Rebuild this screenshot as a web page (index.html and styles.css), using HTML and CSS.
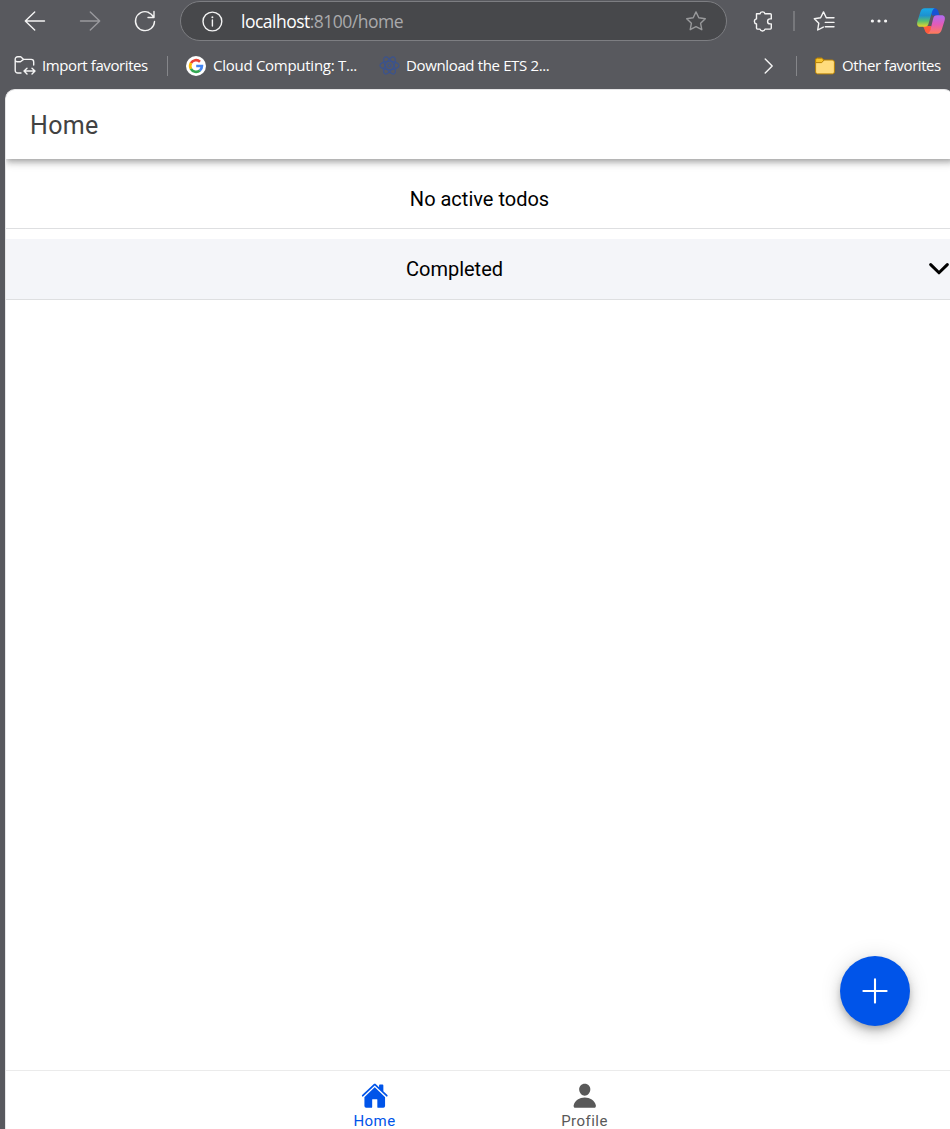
FILE: index.html
```html
<!DOCTYPE html>
<html lang="en">
<head>
<meta charset="utf-8">
<title>Home</title>
<link rel="stylesheet" href="styles.css">
</head>
<body>
<header class="toolbar">
  <svg class="icon" viewBox="0 0 24 24"><path d="M21.5 12H2.3M11.7 3l-9.4 9 9.4 9"/></svg>
  <svg class="icon dim" viewBox="0 0 24 24"><path d="M2.5 12h19.2M12.3 3l9.4 9-9.4 9"/></svg>
  <svg class="icon" viewBox="0 0 24 24"><path d="M15.5 3.3A9.5 9.5 0 1 0 21.5 12.5M21 2.5v6h-6M15.2 3.3Q18.5 4.7 20.8 8.3"/></svg>
  <div class="address">
    <svg class="info" viewBox="0 0 24 24"><circle cx="12.4" cy="12.5" r="9.4"/><path d="M12.4 11v6"/><circle class="solid" cx="12.4" cy="8.2" r="1"/></svg>
    <span class="url"><b>localhost</b>:8100/home</span>
    <svg class="star" viewBox="0 0 24 24"><path d="M12 2.9l2.8 5.9 6.5.9-4.7 4.6 1.2 6.4-5.8-3-5.8 3 1.2-6.4-4.7-4.6 6.5-.9z"/></svg>
  </div>
  <svg class="icon puzzle" viewBox="0 0 24 24"><path d="M5.5 4.8H9a2.6 2.6 0 0 1 5 0h5.3a1 1 0 0 1 1 1v4.1h-1.2a2.5 2.5 0 0 0 0 5h1.2v4.2a1 1 0 0 1-1 1H14a2.6 2.6 0 0 1-5 0H6.5a1 1 0 0 1-1-1V15a2.6 2.6 0 0 1 0-5.1z"/></svg>
  <i class="rule"></i>
  <svg class="icon favs" viewBox="0 0 24 24"><path d="M14.3 8.8L11.5 2.9 8.6 8.8l-6.3.9 4.5 4.5L5.7 21l5.6-2.9M14.3 8.8H22M13.3 13.4H22M13.3 17.8H22"/></svg>
  <svg class="icon more" viewBox="0 0 24 24"><circle class="solid" cx="5.4" cy="12" r="1.6"/><circle class="solid" cx="12" cy="12" r="1.6"/><circle class="solid" cx="18.6" cy="12" r="1.6"/></svg>
  <svg class="copilot" viewBox="0 0 30 30">
    <defs>
      <linearGradient id="cool" x1="0" y1="0" x2="0" y2="1"><stop offset="0" stop-color="#19a9e8"/><stop offset=".4" stop-color="#1d91cf"/><stop offset=".7" stop-color="#58bd70"/><stop offset="1" stop-color="#e8d62a"/></linearGradient>
      <linearGradient id="warm" x1="0" y1="0" x2="0" y2="1"><stop offset="0" stop-color="#ae6cf2"/><stop offset=".5" stop-color="#e35bb8"/><stop offset="1" stop-color="#ff7c58"/></linearGradient>
    </defs>
    <path fill="#1753d5" d="M14 2.2h4.6c2.3 0 3.2 1.3 3.8 3.4l1.1 4H16z"/>
    <path fill="#ff5a3c" d="M7 20h8.5l-1.5 7.7h-1.4c-2.1 0-3.2-1.4-3.8-3.4z"/>
    <path fill="url(#cool)" d="M8.8 2.2h10.7c-2.1 0-3 2-3.6 4.1l-3.3 11.2c-.6 2.2-1.6 3.2-4 3.2H4.4c-3.1 0-3.8-2.4-3-5.3l2.8-9c.8-2.6 2-4.2 4.6-4.2z"/>
    <path fill="url(#warm)" d="M21.2 9.2h4.4c3.1 0 3.8 2.4 3 5.3l-2.8 9c-.8 2.6-2 4.2-4.6 4.2H10.9c2.1 0 3-2 3.6-4.1l2.7-11.2c.6-2.2 1.6-3.2 4-3.2z"/>
  </svg>
</header>

<nav class="bookmarks">
  <svg class="import" viewBox="0 0 22 22"><path d="M7 18H3.8a2.6 2.6 0 0 1-2.6-2.6V4.2a2.5 2.5 0 0 1 2.5-2.5h3l3 2.7h7.5a2.5 2.5 0 0 1 2.5 2.5V10M1.2 5.5q.3 1.2 2 1.2h3.2L9.6 4.4M10.5 16h10M13 13.2L10 16l3 2.9M18 13.2l3 2.8-3 2.9"/></svg>
  <span class="b-import">Import favorites</span>
  <i class="rule thin"></i>
  <svg class="google" viewBox="0 0 20 20"><circle cx="10" cy="10" r="10" fill="#fff"/><g fill="none" stroke-width="2.7"><path stroke="#ea4335" d="M4.9 7.1A5.9 5.9 0 0 1 14 5.7"/><path stroke="#fbbc05" d="M5 13A5.9 5.9 0 0 1 5 7"/><path stroke="#34a853" d="M13.9 14.4A5.9 5.9 0 0 1 4.9 12.9"/><path stroke="#4285f4" d="M10.2 10h5.7a5.9 5.9 0 0 1-2.1 4.5"/></g></svg>
  <span class="b-cloud">Cloud Computing: T...</span>
  <svg class="atom" viewBox="0 0 22 22"><ellipse cx="11" cy="11" rx="10" ry="4.2"/><ellipse cx="11" cy="11" rx="10" ry="4.2" transform="rotate(60 11 11)"/><ellipse cx="11" cy="11" rx="10" ry="4.2" transform="rotate(120 11 11)"/><circle cx="11" cy="11" r="1.7"/></svg>
  <span class="b-ets">Download the ETS 2...</span>
  <svg class="overflow" viewBox="0 0 10 16"><path d="M1.2 1l7 7-7 7"/></svg>
  <i class="rule thin"></i>
  <svg class="folder" viewBox="0 0 20 18"><path fill="#ffdc7d" stroke="#b78105" d="M.6 3A1.8 1.8 0 0 1 2.4 1.2h4.2L9 3h8.2a2.2 2.2 0 0 1 2.2 2.2v9.7a2 2 0 0 1-2 2H2.6a2 2 0 0 1-2-2z"/><path fill="#f8c52e" stroke="#b78105" d="M.6 5.6V3A1.8 1.8 0 0 1 2.4 1.2h4.2L9 3 6.8 5.6z"/></svg>
  <span class="b-other">Other favorites</span>
</nav>

<main class="app">
  <div class="app-header"><h1>Home</h1></div>
  <section class="content">
    <div class="item">No active todos</div>
    <div class="item completed">
      <span>Completed</span>
      <svg class="chevron" viewBox="0 0 20 12"><path d="M1.7 1.6L10 9.8l8.3-8.2"/></svg>
    </div>
    <button class="fab" aria-label="Add"><svg viewBox="0 0 30 30"><path d="M15 3.4v23.2M3.4 15h23.2"/></svg></button>
  </section>
  <footer class="tabs">
    <a class="tab selected">
      <svg viewBox="0 0 512 512"><path d="M261.56 101.28a8 8 0 00-11.06 0L66.4 277.15a8 8 0 00-2.47 5.79L63.9 448a32 32 0 0032 32H192a16 16 0 0016-16V328a8 8 0 018-8h80a8 8 0 018 8v136a16 16 0 0016 16h96.06a32 32 0 0032-32V282.94a8 8 0 00-2.47-5.79z"/><path d="M490.91 244.15l-74.8-71.56V64a16 16 0 00-16-16h-48a16 16 0 00-16 16v32l-57.92-55.38C272.77 35.14 264.71 32 256 32c-8.68 0-16.72 3.14-22.14 8.63L21.16 244.13c-6.22 6-7 15.87-1.34 22.37A16 16 0 0043 267.56L250.5 69.28a8 8 0 0111.06 0l207.52 198.28a16 16 0 0022.59-.44c6.14-6.36 5.63-16.86-.76-22.97z"/></svg>
      <span>Home</span>
    </a>
    <a class="tab">
      <svg viewBox="0 0 512 512"><path d="M332.64 64.58C313.18 43.57 286 32 256 32c-30.16 0-57.43 11.5-76.8 32.38-19.58 21.11-29.12 49.8-26.88 80.78C156.76 206.28 203.27 256 256 256s99.16-49.71 103.67-110.82c2.27-30.7-7.33-59.33-27.03-80.6zM432 480H80a31 31 0 01-24.2-11.13c-6.5-7.77-9.12-18.38-7.18-29.11C57.06 392.94 83.4 353.61 124.8 326c36.78-24.51 83.37-38 131.2-38s94.42 13.5 131.2 38c41.4 27.6 67.74 66.93 76.18 113.75 1.94 10.73-.68 21.34-7.18 29.11A31 31 0 01432 480z"/></svg>
      <span>Profile</span>
    </a>
  </footer>
</main>
</body>
</html>
```

FILE: styles.css
```css
* { box-sizing: border-box; }

body {
  margin: 0;
  height: 1129px;
  display: flex;
  flex-direction: column;
  overflow: hidden;
  background: #58595e;
  color: #fff;
  font-family: "Open Sans", "Noto Sans", sans-serif;
}

svg { display: block; flex: none; }

/* Browser toolbar */
.toolbar {
  height: 42px;
  padding-left: 23px;
  display: flex;
  align-items: center;
  flex: none;
}

.toolbar svg, .import, .overflow {
  fill: none;
  stroke: #f4f4f4;
  stroke-width: 1.4;
  stroke-linecap: round;
  stroke-linejoin: round;
}

.toolbar .solid { fill: #f4f4f4; stroke: none; }
.icon { width: 24px; height: 24px; margin-right: 31px; }
.toolbar .dim { stroke: #99999d; }
.icon:nth-child(3) { margin-right: 23px; }

.address {
  width: 547px;
  height: 40px;
  margin-right: 24px;
  padding: 0 18px 0 19px;
  display: flex;
  align-items: center;
  flex: none;
  border: 1px solid #7d7e82;
  border-radius: 20px;
  background: #47484b;
}

.info { width: 24px; height: 24px; }
.toolbar .star { width: 24px; height: 24px; margin-left: auto; stroke: #98999b; }

.url {
  margin-left: 17px;
  font-size: 17.5px;
  letter-spacing: -0.51px;
  line-height: 24px;
  padding-bottom: 1px;
  color: #aaaaac;
  white-space: nowrap;
}

.url b { font-weight: 400; color: #fff; }

.rule { width: 1px; height: 20px; flex: none; background: #85868a; }
.puzzle { margin-right: 18px; }
.toolbar .rule { width: 2px; background: #77787c; }
.favs { margin: 0 31px 0 17px; }
.more { margin-right: 25px; }
.toolbar .copilot { width: 30px; height: 30px; stroke: none; }

/* Favorites bar */
.bookmarks {
  height: 47px;
  padding-left: 14px;
  display: flex;
  align-items: center;
  flex: none;
  font-size: 15px;
  line-height: 20px;
  white-space: nowrap;
}

.bookmarks span { flex: none; padding-bottom: 2px; }
.import { width: 22px; height: 22px; }
.b-import { width: 125px; margin-left: 6px; letter-spacing: -0.41px; }
.google { width: 20px; height: 20px; margin-left: 18px; }
.b-cloud { width: 166px; margin-left: 7px; letter-spacing: -0.27px; }
.atom { width: 21px; height: 21px; fill: none; stroke: #3b538e; stroke-width: 1.3; }
.b-ets { width: 358px; margin-left: 6px; letter-spacing: -0.36px; }
.overflow { width: 10px; height: 16px; margin-right: 22px; }
.folder { width: 20px; height: 18px; margin-left: 18px; }
.b-other { margin-left: 7px; letter-spacing: -0.44px; }

/* Application */
.app {
  position: relative;
  width: 949px;
  height: 1040px;
  margin-left: 5px;
  display: flex;
  flex-direction: column;
  flex: none;
  overflow: hidden;
  border-left: 1px solid #e6e6e7;
  border-top: 1px solid #e6e6e7;
  border-radius: 10px 10px 0 0;
  background: #fff;
  color: #000;
  font-family: Roboto, sans-serif;
}

.app-header {
  height: 69px;
  padding: 1px 24px 0;
  display: flex;
  align-items: center;
  flex: none;
  z-index: 1;
  box-shadow: 0 2.5px 5px -1px rgba(0, 0, 0, .2), 0 5px 6px rgba(0, 0, 0, .14), 0 1px 12.5px rgba(0, 0, 0, .12);
}

h1 {
  margin: 0;
  font-size: 25px;
  font-weight: 400;
  letter-spacing: .3px;
  color: #424242;
}

.content { flex: 1; }

.item {
  height: 70px;
  padding: 10px 1px 0 0;
  display: flex;
  align-items: center;
  justify-content: center;
  border-bottom: 1px solid #dedfe1;
  font-size: 20px;
}

.completed {
  height: 61px;
  margin-top: 10px;
  padding: 0 5px 0 0;
  background: #f4f5f9;
}

.completed span { flex: 1; text-align: center; }

.chevron {
  width: 20px;
  height: 12px;
  margin-left: 26px;
  fill: none;
  stroke: #000;
  stroke-width: 3;
  stroke-linecap: round;
  stroke-linejoin: round;
}

.fab {
  position: absolute;
  right: 44px;
  bottom: 103px;
  width: 70px;
  height: 70px;
  padding: 20px;
  border: 0;
  border-radius: 50%;
  background: #0054e9;
  box-shadow: 0 4px 6px -1px rgba(0, 0, 0, .2), 0 7px 12.5px rgba(0, 0, 0, .14), 0 1px 22px rgba(0, 0, 0, .12);
}

.fab svg { width: 30px; height: 30px; stroke: #fff; stroke-width: 2.1; stroke-linecap: round; }

.tabs {
  height: 59px;
  padding-right: 1px;
  display: flex;
  justify-content: center;
  flex: none;
  border-top: 1px solid #ebebeb;
  background: #fff;
}

.tab {
  width: 210px;
  padding-top: 11px;
  display: flex;
  flex-direction: column;
  align-items: center;
  font-size: 15px;
  line-height: 22px;
  letter-spacing: .47px;
  color: #595959;
}

.tab svg { width: 27.5px; height: 27.5px; fill: currentColor; }
.selected { color: #0054e9; }
```
